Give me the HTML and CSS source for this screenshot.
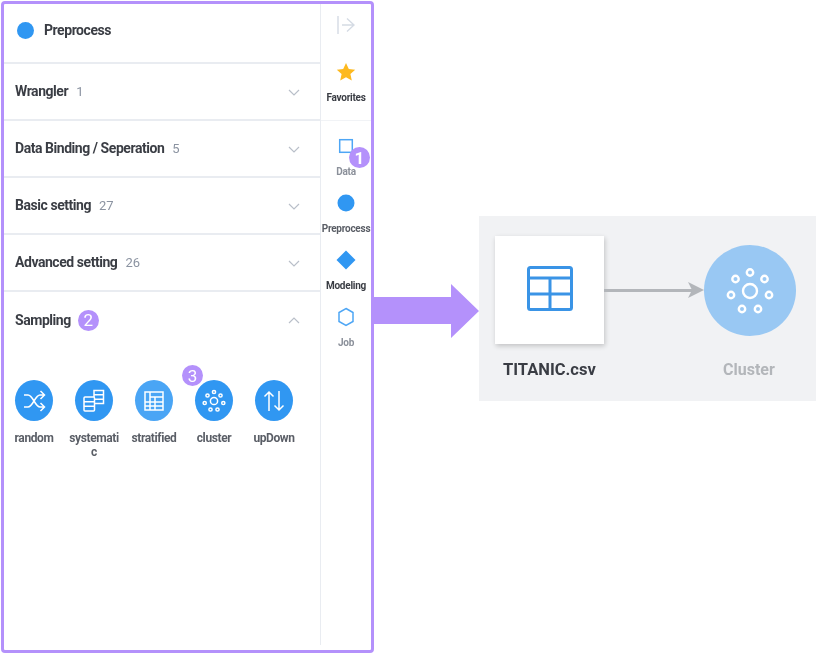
FILE: index.html
```html
<!DOCTYPE html>
<html lang="en">
	<head>
		<meta charset="utf-8">
		<meta name="viewport" content="width=device-width, initial-scale=1.0">
		<title>Preprocess</title>
		<link rel="stylesheet" href="styles.css">
	</head>
	<body>
		<div class="page">
			<div class="panel">
				<div class="list">
					<div class="list-head">
						<span class="dot"></span>
						<span class="list-title">Preprocess</span>
					</div>
					<div class="row">
						<span class="row-name">Wrangler</span><span class="row-count">1</span>
						<svg class="chev" width="12" height="7" viewBox="0 0 12 7"><path d="M1 1l5 5 5-5"/></svg>
					</div>
					<div class="row">
						<span class="row-name">Data Binding / Seperation</span><span class="row-count">5</span>
						<svg class="chev" width="12" height="7" viewBox="0 0 12 7"><path d="M1 1l5 5 5-5"/></svg>
					</div>
					<div class="row">
						<span class="row-name">Basic setting</span><span class="row-count">27</span>
						<svg class="chev" width="12" height="7" viewBox="0 0 12 7"><path d="M1 1l5 5 5-5"/></svg>
					</div>
					<div class="row">
						<span class="row-name">Advanced setting</span><span class="row-count">26</span>
						<svg class="chev" width="12" height="7" viewBox="0 0 12 7"><path d="M1 1l5 5 5-5"/></svg>
					</div>
					<div class="row row-open">
						<span class="row-name">Sampling</span>
						<span class="badge badge-inline">2</span>
						<svg class="chev" width="12" height="7" viewBox="0 0 12 7"><path d="M1 6l5-5 5 5"/></svg>
					</div>
					<div class="tools">
						<div class="tool">
							<span class="tool-icon">
								<svg width="26" height="26" viewBox="0 0 26 26"><path d="M3 7h4c5 0 7 12 12 12h4M3 19h4c5 0 7-12 12-12h4M19.500 3l4 4-4 4M19.500 15l4 4-4 4"/></svg>
							</span>
							<span class="tool-name">random</span>
						</div>
						<div class="tool">
							<span class="tool-icon">
								<svg width="26" height="26" viewBox="0 0 26 26"><rect x="3" y="9" width="10.500" height="14" rx="1"/><path d="M3 13.700h10.500M3 18.300h10.500"/><path d="M13.500 15.500h9v-13h-9.500v6.500M13 6.800h9.500M13.500 11.200h9"/></svg>
							</span>
							<span class="tool-name">systematic</span>
						</div>
						<div class="tool">
							<span class="tool-icon tool-icon-light">
								<svg width="26" height="26" viewBox="0 0 26 26"><rect x="4" y="4" width="18" height="18"/><path d="M4 14h18M4 18h18M9 4v18M14 9v13M9 9h13"/></svg>
							</span>
							<span class="tool-name">stratified</span>
						</div>
						<div class="tool">
							<span class="badge badge-tool">3</span>
							<span class="tool-icon">
								<svg width="26" height="26" viewBox="0 0 26 26">
									<circle cx="13" cy="13" r="3.600"/>
									<circle cx="13" cy="4" r="1.600"/>
									<circle cx="6.500" cy="7.500" r="1.600"/>
									<circle cx="19.500" cy="7.500" r="1.600"/>
									<circle cx="3.700" cy="15" r="1.600"/>
									<circle cx="22.300" cy="15" r="1.600"/>
									<circle cx="9.500" cy="21.500" r="1.600"/>
									<circle cx="16.500" cy="21.500" r="1.600"/>
								</svg>
							</span>
							<span class="tool-name">cluster</span>
						</div>
						<div class="tool">
							<span class="tool-icon">
								<svg width="26" height="26" viewBox="0 0 26 26"><path d="M8 23V4M3.500 8.500L8 4l4.500 4.500M18 3v19M13.500 17.500L18 22l4.500-4.500"/></svg>
							</span>
							<span class="tool-name">upDown</span>
						</div>
					</div>
				</div>
				<div class="rail">
					<div class="rail-top">
						<svg class="collapse" width="18" height="20" viewBox="0 0 18 20"><path d="M1 1v18M5 10h12M10 3.500l7 6.500-7 6.500"/></svg>
						<svg class="rail-icon" width="20" height="20" viewBox="0 0 20 20"><path class="fill-star" d="M10 1l2.800 6 6.400.7-4.800 4.400 1.400 6.500L10 15.300l-5.800 3.300 1.400-6.500L.8 7.700 7.200 7z"/></svg>
						<span class="rail-label rail-label-dark">Favorites</span>
					</div>
					<div class="rail-item">
						<svg class="rail-icon" width="20" height="20" viewBox="0 0 20 20"><rect class="line-blue" x="3.700" y="3.700" width="12.600" height="12.600"/></svg>
						<span class="rail-label">Data</span>
						<span class="badge badge-rail">1</span>
					</div>
					<div class="rail-item">
						<svg class="rail-icon" width="20" height="20" viewBox="0 0 20 20"><circle class="fill-blue" cx="10" cy="10" r="8.500"/></svg>
						<span class="rail-label rail-label-mid">Preprocess</span>
					</div>
					<div class="rail-item">
						<svg class="rail-icon" width="20" height="20" viewBox="0 0 20 20"><path class="fill-blue" d="M10 .5L19.500 10 10 19.500.5 10z"/></svg>
						<span class="rail-label rail-label-dark">Modeling</span>
					</div>
					<div class="rail-item">
						<svg class="rail-icon" width="20" height="20" viewBox="0 0 20 20"><path class="line-blue" d="M10 1.500l7 4v9l-7 4-7-4v-9z"/></svg>
						<span class="rail-label">Job</span>
					</div>
				</div>
			</div>
			<svg class="big-arrow" width="107" height="54" viewBox="0 0 107 54"><path d="M0 13h79V0l28 27-28 27V40H0z"/></svg>
			<div class="flow">
				<div class="flow-card">
					<svg width="46" height="46" viewBox="0 0 46 46"><rect x="1.500" y="1.500" width="43" height="42" rx="2"/><path d="M1.500 12h43M1.500 28h43M23 12v31"/></svg>
				</div>
				<div class="flow-line"></div>
				<svg class="flow-head" width="16" height="16" viewBox="0 0 16 16"><path d="M0 0l16 8-16 8 4-8z"/></svg>
				<div class="flow-node">
					<svg width="50" height="50" viewBox="0 0 50 50">
						<circle cx="25" cy="25" r="7"/>
						<circle cx="25" cy="6.500" r="3.200"/>
						<circle cx="10.500" cy="13" r="3.200"/>
						<circle cx="39.500" cy="13" r="3.200"/>
						<circle cx="6" cy="29" r="3.200"/>
						<circle cx="44" cy="29" r="3.200"/>
						<circle cx="17" cy="43" r="3.200"/>
						<circle cx="33" cy="43" r="3.200"/>
					</svg>
				</div>
				<span class="flow-name">TITANIC.csv</span>
				<span class="flow-name flow-name-off">Cluster</span>
			</div>
		</div>
	</body>
</html>
```

FILE: styles.css
```css
* {
	box-sizing: border-box;
}
html, body {
	height: 100%;
}
body {
	margin: 0;
	background-color: #ffffff;
	font-family: 'Roboto', 'Liberation Sans', sans-serif;
	overflow: hidden;
}
.page {
	display: flex;
	align-items: flex-start;
	padding: 1px 0 0 1px;
}
.panel {
	display: flex;
	flex: none;
	width: 373px;
	height: 652px;
	padding-bottom: 5px;
	background-color: #ffffff;
	border: 3px solid #b491fb;
	border-radius: 4px;
}
.list {
	width: 316px;
	flex: none;
	filter: blur(0.3px);
}
.list-head {
	display: flex;
	align-items: center;
	gap: 10px;
	height: 60px;
	padding: 0 0 6px 13px;
	border-bottom: 2px solid #e9ecf1;
}
.dot {
	width: 17px;
	height: 17px;
	border-radius: 50%;
	background-color: #3097f2;
}
.list-title {
	font-size: 14px;
	font-weight: 700;
	letter-spacing: -0.45px;
	color: #3a3d44;
}
.row {
	position: relative;
	display: flex;
	align-items: center;
	height: 57px;
	padding: 0 0 1px 11px;
	border-bottom: 2px solid #e9ecf1;
}
.row-open {
	border-bottom: 0;
	height: 56px;
}
.row-name {
	font-size: 14px;
	font-weight: 700;
	letter-spacing: -0.45px;
	color: #3a3d44;
}
.row-count {
	margin-left: 8px;
	font-size: 13px;
	color: #8b93a1;
}
.chev {
	position: absolute;
	right: 20px;
	top: 25px;
	fill: none;
	stroke: #b9bfc9;
	stroke-width: 1.200;
}
.badge {
	display: flex;
	align-items: center;
	justify-content: center;
	width: 21px;
	height: 21px;
	border-radius: 50%;
	background-color: #b491fb;
	color: #ffffff;
	font-size: 17px;
}
.badge-inline {
	margin: 1px 0 0 7px;
}
.badge-tool {
	position: absolute;
	left: -13px;
	top: -15px;
}
.badge-rail {
	position: absolute;
	left: 28px;
	top: 26px;
	font-weight: 700;
}
.tools {
	display: flex;
	padding: 32px 0 0 11px;
}
.tool {
	position: relative;
	width: 60px;
	flex: none;
	display: flex;
	flex-direction: column;
}
.tool-icon {
	display: flex;
	align-items: center;
	justify-content: center;
	width: 38px;
	height: 41px;
	border-radius: 50%;
	background-color: #3097f2;
}
.tool-icon-light {
	background-color: #4aa5f5;
}
.tool-icon svg {
	fill: none;
	stroke: #ffffff;
	stroke-width: 1.500;
}
.tool-name {
	width: 52px;
	margin: 10px 0 0 -7px;
	font-size: 12px;
	line-height: 14px;
	font-weight: 700;
	letter-spacing: -0.4px;
	color: #5a5e66;
	text-align: center;
	word-break: break-all;
}
.rail {
	flex: 1;
	border-left: 1px solid #e9ecf1;
	filter: blur(0.3px);
}
.rail-top {
	display: flex;
	flex-direction: column;
	align-items: center;
	height: 117px;
	padding-top: 11px;
	border-bottom: 1px solid #f1f3f6;
}
.collapse {
	fill: none;
	stroke: #d5dbe4;
	stroke-width: 1.400;
	margin-bottom: 27px;
}
.rail-item {
	position: relative;
	display: flex;
	flex-direction: column;
	align-items: center;
	height: 57px;
	padding-top: 15px;
}
.rail-icon {
	flex: none;
}
.rail-label {
	margin-top: 10px;
	font-size: 10px;
	line-height: 12px;
	font-weight: 700;
	letter-spacing: -0.25px;
	color: #8b909a;
	white-space: nowrap;
}
.rail-label-mid {
	color: #5a5e66;
}
.rail-label-dark {
	color: #3a3d44;
}
.fill-star {
	fill: #fdb91f;
}
.fill-blue {
	fill: #3097f2;
}
.line-blue {
	fill: none;
	stroke: #4ea6f5;
	stroke-width: 1.500;
}
.big-arrow {
	flex: none;
	margin: 283px 0 0 -2px;
	fill: #b491fb;
}
.flow {
	position: relative;
	flex: none;
	width: 337px;
	height: 185px;
	margin-top: 215px;
	background-color: #f1f2f4;
	filter: blur(0.5px);
}
.flow-card {
	position: absolute;
	left: 16px;
	top: 20px;
	width: 109px;
	height: 108px;
	display: flex;
	align-items: center;
	justify-content: center;
	background-color: #ffffff;
	box-shadow: 1px 2px 5px rgba(0, 0, 0, 0.2);
}
.flow-card svg {
	fill: none;
	stroke: #3a94e6;
	stroke-width: 3;
	margin-bottom: 2px;
}
.flow-line {
	position: absolute;
	left: 125px;
	top: 73px;
	width: 90px;
	height: 3px;
	background-color: #b3b6ba;
}
.flow-head {
	position: absolute;
	left: 209px;
	top: 66px;
	fill: #b3b6ba;
}
.flow-node {
	position: absolute;
	left: 225px;
	top: 29px;
	width: 92px;
	height: 91px;
	display: flex;
	align-items: center;
	justify-content: center;
	border-radius: 50%;
	background-color: #99c8f3;
}
.flow-node svg {
	fill: none;
	stroke: #ffffff;
	stroke-width: 2.400;
}
.flow-name {
	position: absolute;
	left: 24px;
	top: 144px;
	font-size: 16.500px;
	font-weight: 700;
	color: #3a3d44;
}
.flow-name-off {
	left: 244px;
	font-size: 16px;
	color: #b3b6ba;
}
```
